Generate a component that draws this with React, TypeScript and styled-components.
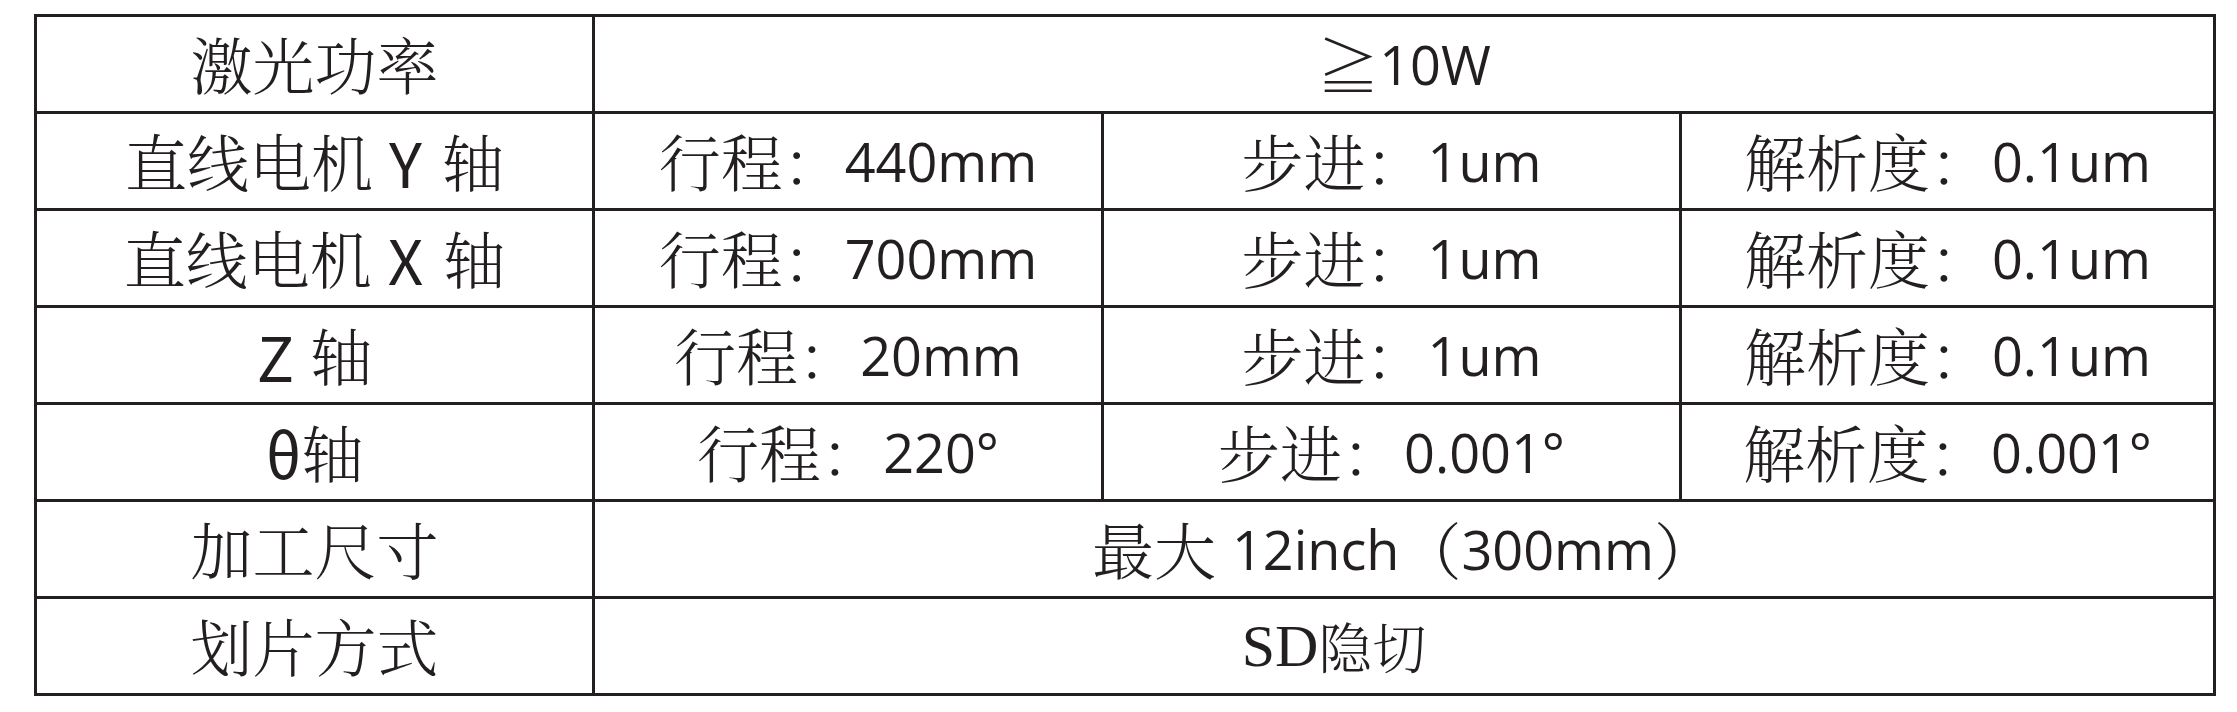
import React from "react";
import styled, { createGlobalStyle } from "styled-components";

const GlobalStyle = createGlobalStyle`
  html, body {
    margin: 0;
    padding: 0;
    background: #ffffff;
  }
`;

const Page = styled.div`
  padding: 14px 0 0 34px;
`;

const Table = styled.div`
  display: grid;
  grid-template-columns: 555px 506px 575px 531px;
  grid-auto-rows: 94px;
  gap: 3px;
  padding: 3px;
  width: max-content;
  background: #231f20;
  color: #231f20;
`;

const Cell = styled.div<{ $span?: number; $shift?: number }>`
  grid-column: span ${(p) => p.$span || 1};
  display: flex;
  align-items: center;
  justify-content: center;
  padding-right: ${(p) => p.$shift || 0}px;
  background: #ffffff;
  white-space: pre;
  font-family: "Noto Serif CJK SC", "Noto Sans CJK SC", serif;
  font-size: 62px;
  font-weight: 300;
  line-height: 1;
`;

const Num = styled.span`
  font-family: "Open Sans", "Noto Sans", sans-serif;
  font-size: 54px;
  font-weight: 400;
`;

const Axis = styled.span<{ $tight?: boolean }>`
  font-family: "Noto Sans CJK SC", sans-serif;
  font-weight: 400;
  margin: ${(p) => (p.$tight ? "0" : "0 4px 0 16px")};
`;

const Song = styled.span<{ $size?: number }>`
  font-family: "Liberation Serif", "Noto Serif CJK SC", serif;
  font-size: ${(p) => p.$size || 60}px;
`;

const SmallHan = styled.span`
  font-size: 54px;
`;

type AxisRow = {
  label: React.ReactNode;
  travel: string;
  step: string;
  res: string;
};

const axes: AxisRow[] = [
  {
    label: (
      <>
        直线电机<Axis>Y</Axis> 轴
      </>
    ),
    travel: "440mm",
    step: "1um",
    res: "0.1um",
  },
  {
    label: (
      <>
        直线电机<Axis>X</Axis> 轴
      </>
    ),
    travel: "700mm",
    step: "1um",
    res: "0.1um",
  },
  {
    label: (
      <>
        <Axis $tight>Z</Axis> 轴
      </>
    ),
    travel: "20mm",
    step: "1um",
    res: "0.1um",
  },
  {
    label: (
      <>
        <Axis $tight>θ</Axis>轴
      </>
    ),
    travel: "220°",
    step: "0.001°",
    res: "0.001°",
  },
];

const App: React.FC = () => {
  return (
    <>
      <GlobalStyle />
      <Page>
        <Table>
          <Cell>激光功率</Cell>
          <Cell $span={3}>
            ≧<Num>10W</Num>
          </Cell>

          {axes.map((row, i) => (
            <React.Fragment key={i}>
              <Cell>{row.label}</Cell>
              <Cell>
                行程：<Num>{row.travel}</Num>
              </Cell>
              <Cell>
                步进：<Num>{row.step}</Num>
              </Cell>
              <Cell>
                解析度：<Num>{row.res}</Num>
              </Cell>
            </React.Fragment>
          ))}

          <Cell>加工尺寸</Cell>
          <Cell $span={3}>
            最大 <Num>12inch</Num>（<Num>300mm</Num>）
          </Cell>

          <Cell>划片方式</Cell>
          <Cell $span={3} $shift={140}>
            <Song>SD</Song>
            <SmallHan>隐切</SmallHan>
          </Cell>
        </Table>
      </Page>
    </>
  );
};

export default App;
